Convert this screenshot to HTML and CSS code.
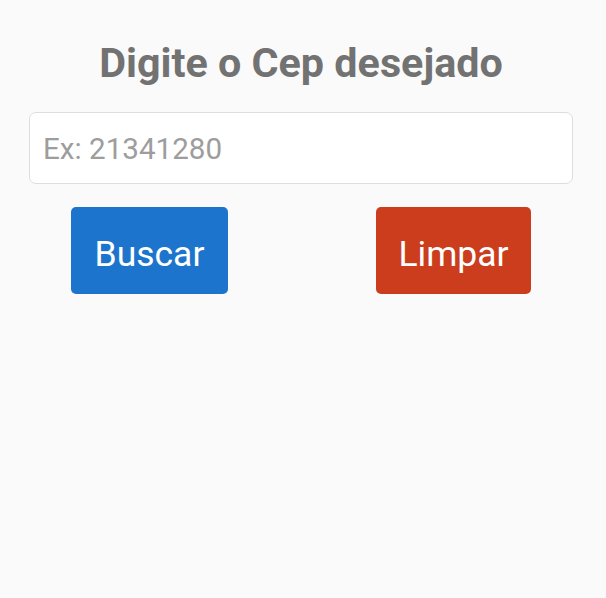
FILE: index.html
```html
<!DOCTYPE html>
<html lang="pt">
<head>
<meta charset="utf-8">
<link rel="stylesheet" href="styles.css">
</head>
<body>
<main class="page">
  <h1 class="title">Digite o Cep desejado</h1>
  <input class="cep-input" type="text" placeholder="Ex: 21341280">
  <div class="actions">
    <button class="btn btn-search">Buscar</button>
    <button class="btn btn-clear">Limpar</button>
  </div>
</main>
</body>
</html>
```
FILE: styles.css
```css
html, body {
  margin: 0;
  padding: 0;
  background: #fafafa;
  font-family: Roboto, "Noto Sans", sans-serif;
}
.page {
  width: 606px;
  height: 598px;
  box-sizing: border-box;
  padding: 0 33px 0 29px;
  display: flex;
  flex-direction: column;
}
.title {
  margin: 38px 0 0;
  text-align: center;
  font-size: 41.3px;
  line-height: 50px;
  font-weight: 700;
  color: #727272;
}
.cep-input {
  margin-top: 24px;
  height: 72px;
  box-sizing: border-box;
  border: 1.5px solid #dedede;
  border-radius: 7px;
  background: #fff;
  padding: 2px 13px 0;
  font-family: Roboto, sans-serif;
  font-size: 29.6px;
  color: #333;
  outline: none;
}
.cep-input::placeholder {
  color: #9d9d9d;
}
.actions {
  margin-top: 23px;
  display: flex;
  justify-content: space-between;
  padding: 0 42px;
}
.btn {
  width: 157px;
  height: 87px;
  border: none;
  border-radius: 5px;
  color: #fff;
  font-family: Roboto, sans-serif;
  font-size: 35.5px;
  padding: 6px 0 0;
}
.btn-search {
  background: #1d74cc;
}
.btn-clear {
  width: 155px;
  background: #cb3d1c;
}
```
